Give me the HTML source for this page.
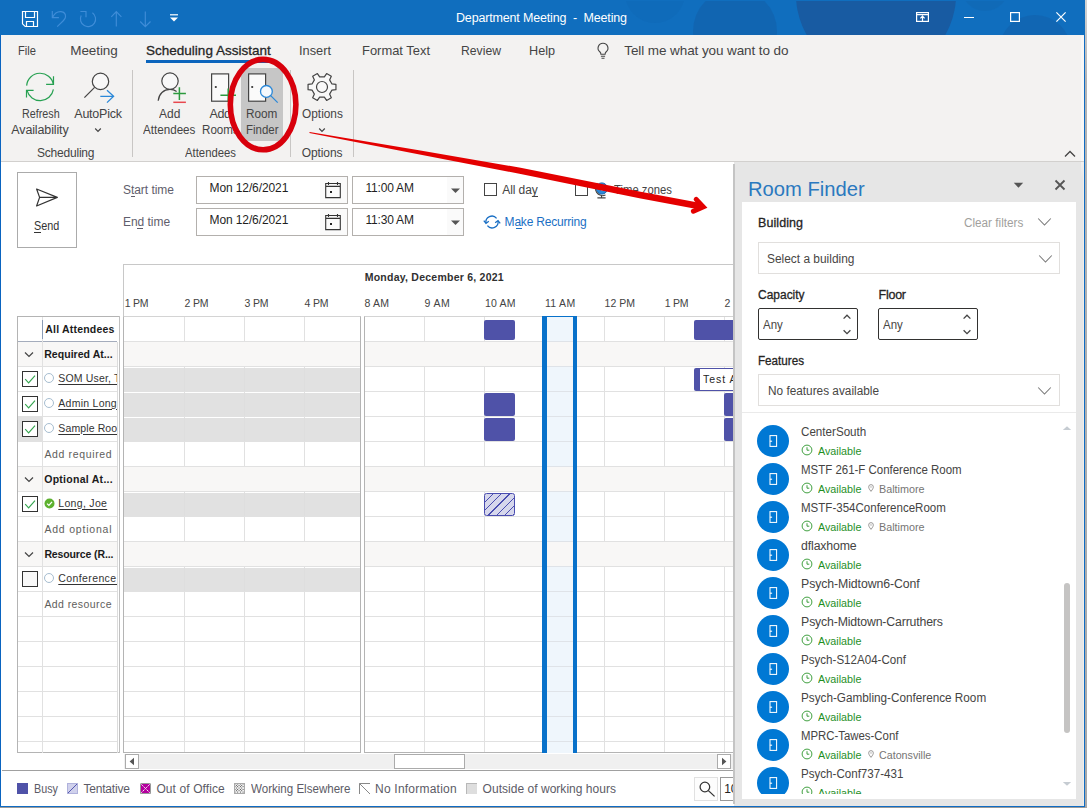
<!DOCTYPE html>
<html><head><meta charset="utf-8">
<title>Department Meeting - Meeting</title>
<style>
*{box-sizing:border-box;margin:0;padding:0}
html,body{width:1087px;height:808px;overflow:hidden;background:#fff}
body{font-family:"Liberation Sans",sans-serif;font-size:12px;color:#323130;position:relative}
.a{position:absolute}
.t{position:absolute;white-space:nowrap;line-height:16px}
svg{overflow:visible}
#titlebar{left:0;top:0;width:1085px;height:35px;background:#106ebe}
#ribbon{left:0;top:35px;width:1085px;height:127px;background:#f3f2f1;border-bottom:1px solid #d2d0ce}
#pane{left:734px;top:162px;width:352px;height:644px;background:#e6e6e6}
#panew{left:742px;top:202px;width:334px;height:597px;background:#fff}
</style></head><body>
<div class="a" id="titlebar"></div>
<div class="a" id="ribbon"></div>
<div class="a" id="pane"></div>
<div class="a" id="panew"></div>
<!-- title -->
<div class="a" style="left:0;top:1px;width:1085px;height:34px;overflow:hidden"><div class="a" style="left:796px;top:-86px;width:160px;height:160px;border-radius:50%;background:#185ba2;opacity:1"></div><div class="a" style="left:693px;top:-12px;width:84px;height:84px;border-radius:50%;background:#1261ab;opacity:0.65"></div><div class="a" style="left:625px;top:-38px;width:60px;height:60px;border-radius:50%;background:#0f66b4;opacity:0.4"></div><div class="a" style="left:999px;top:14px;width:72px;height:72px;border-radius:50%;background:#1261ab;opacity:0.6"></div><div class="a" style="left:961px;top:-38px;width:48px;height:48px;border-radius:50%;background:#1263ad;opacity:0.35"></div></div>
<div class="t" style="left:456.0px;top:9.5px;font-size:12.5px;color:#fff;letter-spacing:-0.165px;white-space:pre;">Department Meeting  -  Meeting</div>
<svg class="a" style="left:21px;top:10px;" width="18" height="18" viewBox="0 0 18 18" fill="none"><path d="M1.5 1.5H16.5V16.5H4.2L1.5 13.8z M4.5 1.5V7.5H13.5V1.5 M5.5 16.5V11.5H12.5V16.5" stroke="#fff" stroke-width="1.2" stroke-linejoin="miter"/></svg>
<svg class="a" style="left:0px;top:0px;" width="200" height="35" viewBox="0 0 200 35" fill="none"><path d="M52.3 11V17.6H58.9 M52.6 17.3C54.5 13.2 58 11.4 61 11.6C64 11.9 65.7 14.2 65.5 17C65.3 19 64 20.2 57.2 26.6" stroke="#3f8dd8" stroke-width="1.15"/><path d="M80.4 11.5H86V17.3 M81.2 15.6A7.6 7.6 0 1 0 92.4 12.8" stroke="#3f8dd8" stroke-width="1.15"/><path d="M116.3 26.6V11.5 M111.3 16.8L116.3 11.6L121.4 16.8" stroke="#3f8dd8" stroke-width="1.15"/><path d="M145.3 11.5V26.4 M140.2 21.5L145.3 26.6L150.5 21.5" stroke="#3f8dd8" stroke-width="1.15"/></svg>
<svg class="a" style="left:169px;top:13px;" width="10" height="10" viewBox="0 0 10 10" fill="none"><path d="M1 1.8h8" stroke="#fff" stroke-width="1.2"/><path d="M1 4.5h8L5 8.5z" fill="#fff"/></svg>
<svg class="a" style="left:916px;top:12px;" width="13" height="10" viewBox="0 0 13 10" fill="none"><rect x="0.6" y="0.6" width="11.8" height="8.8" stroke="#fff" stroke-width="1.2"/><path d="M0.6 2.6h11.8 M6.5 9.4V4.4 M4.4 6.3L6.5 4.2L8.6 6.3" stroke="#fff" stroke-width="1.2"/></svg>
<div class="a" style="left:964px;top:17px;width:10px;height:1px;background:#fff;"></div>
<svg class="a" style="left:1010px;top:12px;" width="10" height="10" viewBox="0 0 10 10" fill="none"><rect x="0.6" y="0.6" width="8.8" height="8.8" stroke="#fff" stroke-width="1.2"/></svg>
<svg class="a" style="left:1056px;top:12px;" width="10" height="10" viewBox="0 0 10 10" fill="none"><path d="M0.4 0.4l9.2 9.2 M9.6 0.4l-9.2 9.2" stroke="#fff" stroke-width="1.2"/></svg>
<!-- ribbon -->
<div class="t" style="left:18.4px;top:42.5px;font-size:13.5px;color:#444;transform:scaleX(0.8274);transform-origin:0 50%;">File</div>
<div class="t" style="left:70.3px;top:42.5px;font-size:13.5px;color:#444;letter-spacing:-0.088px;">Meeting</div>
<div class="t" style="left:298.8px;top:42.5px;font-size:13.5px;color:#444;transform:scaleX(0.9478);transform-origin:0 50%;">Insert</div>
<div class="t" style="left:362.0px;top:42.5px;font-size:13.5px;color:#444;transform:scaleX(0.9575);transform-origin:0 50%;">Format Text</div>
<div class="t" style="left:461.0px;top:42.5px;font-size:13.5px;color:#444;transform:scaleX(0.9036);transform-origin:0 50%;">Review</div>
<div class="t" style="left:529.0px;top:42.5px;font-size:13.5px;color:#444;transform:scaleX(0.9364);transform-origin:0 50%;">Help</div>
<div class="t" style="left:146.0px;top:42.5px;font-size:13.5px;color:#262626;letter-spacing:0.011px;-webkit-text-stroke:0.3px #262626;">Scheduling Assistant</div>
<div class="a" style="left:146px;top:60px;width:125px;height:3px;background:#0b65bd;"></div>
<div class="t" style="left:624.3px;top:42.5px;font-size:13.5px;color:#444;letter-spacing:-0.092px;">Tell me what you want to do</div>
<svg class="a" style="left:595.6px;top:42px;" width="14" height="18" viewBox="0 0 14 18" fill="none"><path d="M7 1.2a4.9 4.9 0 0 0-3 8.8c.6.6.9 1.2.9 2.2h4.2c0-1 .3-1.6.9-2.2A4.9 4.9 0 0 0 7 1.2z M4.9 14.2h4.2 M5.5 16.2h3" stroke="#444" stroke-width="1.1"/></svg>
<div class="a" style="left:1080.8px;top:36px;width:3.2px;height:125px;background:#f8f7f6;"></div>
<div class="a" style="left:132px;top:70px;width:1px;height:87px;background:#c8c6c4;"></div>
<div class="a" style="left:290px;top:70px;width:1px;height:87px;background:#c8c6c4;"></div>
<div class="a" style="left:353px;top:70px;width:1px;height:87px;background:#c8c6c4;"></div>
<div class="a" style="left:241px;top:68px;width:42px;height:73px;background:#c6c6c6;"></div>
<div class="t" style="left:21.6px;top:105.8px;font-size:12.5px;color:#444;transform:scaleX(0.8613);transform-origin:0 50%;">Refresh</div>
<div class="t" style="left:11.3px;top:121.6px;font-size:12.5px;color:#444;letter-spacing:-0.130px;">Availability</div>
<div class="t" style="left:74.3px;top:105.8px;font-size:12.5px;color:#444;letter-spacing:-0.233px;">AutoPick</div>
<div class="t" style="left:159.2px;top:105.8px;font-size:12.5px;color:#444;transform:scaleX(0.9576);transform-origin:0 50%;">Add</div>
<div class="t" style="left:143.2px;top:121.6px;font-size:12.5px;color:#444;transform:scaleX(0.9308);transform-origin:0 50%;">Attendees</div>
<div class="t" style="left:209.4px;top:105.8px;font-size:12.5px;color:#444;letter-spacing:-0.321px;">Add</div>
<div class="t" style="left:201.7px;top:121.6px;font-size:12.5px;color:#444;transform:scaleX(0.9294);transform-origin:0 50%;">Rooms</div>
<div class="t" style="left:246.3px;top:105.8px;font-size:12.5px;color:#444;transform:scaleX(0.9417);transform-origin:0 50%;">Room</div>
<div class="t" style="left:245.5px;top:121.6px;font-size:12.5px;color:#444;transform:scaleX(0.9172);transform-origin:0 50%;">Finder</div>
<div class="t" style="left:301.9px;top:105.8px;font-size:12.5px;color:#444;transform:scaleX(0.9494);transform-origin:0 50%;">Options</div>
<div class="t" style="left:37.0px;top:144.8px;font-size:12px;color:#444;letter-spacing:-0.209px;">Scheduling</div>
<div class="t" style="left:185.0px;top:144.8px;font-size:12px;color:#444;transform:scaleX(0.9437);transform-origin:0 50%;">Attendees</div>
<div class="t" style="left:301.8px;top:144.8px;font-size:12px;color:#444;letter-spacing:-0.109px;">Options</div>
<svg class="a" style="left:93.5px;top:126.5px;" width="8" height="6" viewBox="0 0 8 6" fill="none"><path d="M1.2 1.5L4 4.3L6.8 1.5" stroke="#444" stroke-width="1.2"/></svg>
<svg class="a" style="left:317.7px;top:126.5px;" width="8" height="6" viewBox="0 0 8 6" fill="none"><path d="M1.2 1.5L4 4.3L6.8 1.5" stroke="#444" stroke-width="1.2"/></svg>
<svg class="a" style="left:1064px;top:150px;" width="12" height="8" viewBox="0 0 12 8" fill="none"><path d="M1 6.5L6 1.5L11 6.5" stroke="#444" stroke-width="1.3"/></svg>
<svg class="a" style="left:24px;top:72px;" width="32" height="32" viewBox="0 0 32 32" fill="none"><path d="M2.65 13.6A13.5 13.5 0 0 1 29.4 12.4 M29.4 17.3A13.5 13.5 0 0 1 3 18.4" stroke="#27a152" stroke-width="1.2"/><path d="M29.5 4.3V12.4H22.1 M2.5 25.6V18.4H9.6" stroke="#27a152" stroke-width="1.2"/></svg>
<svg class="a" style="left:82px;top:71px;" width="34" height="34" viewBox="0 0 34 34" fill="none"><circle cx="18.5" cy="10.4" r="8.2" stroke="#444" stroke-width="1.2" fill="#f8f8f8"/><path d="M12.6 16.3L2.4 26.6" stroke="#444" stroke-width="1.2"/><path d="M18.3 25.3h13.2 M25 19.2l6.6 6.1L25 31.6" stroke="#2b88d8" stroke-width="1.3"/></svg>
<svg class="a" style="left:156px;top:71px;" width="32" height="34" viewBox="0 0 32 34" fill="none"><path d="M2.2 29.8c.6-7 5.5-11.4 11.8-11.4 2.6 0 4.8.7 6.6 2" stroke="#444" stroke-width="1.2"/><circle cx="14" cy="10.1" r="8.2" stroke="#444" stroke-width="1.2" fill="#f8f8f8"/><path d="M17.3 22.5h12.6 M23.4 16.2v12.7" stroke="#2c9a3e" stroke-width="1.5"/><path d="M17.3 31.3h12.6" stroke="#e8484f" stroke-width="1.5"/></svg>
<svg class="a" style="left:208px;top:71px;" width="32" height="34" viewBox="0 0 32 34" fill="none"><rect x="3.6" y="2.9" width="17" height="27.3" stroke="#444" stroke-width="1.2" fill="#fafafa"/><circle cx="7.8" cy="16" r="1.1" fill="#333"/><path d="M12.4 24.2h15.6 M20.2 17.5v13.4" stroke="#2c9a3e" stroke-width="1.5"/></svg>
<svg class="a" style="left:245px;top:71px;" width="36" height="34" viewBox="0 0 36 34" fill="none"><rect x="3.6" y="2.9" width="17" height="27.3" stroke="#444" stroke-width="1.2" fill="#fafafa"/><circle cx="7.2" cy="16" r="1.1" fill="#333"/><circle cx="21.4" cy="20.4" r="5.9" stroke="#2b88d8" stroke-width="1.3" fill="#f4f8fc"/><path d="M25.7 24.6l7 7" stroke="#2b88d8" stroke-width="1.3"/></svg>
<svg class="a" style="left:306px;top:71.2px;" width="32" height="32" viewBox="0 0 32 32" fill="none"><path d="M25.95 12.96 L29.94 13.29 L29.94 18.71 L25.95 19.04 L23.61 23.09 L25.32 26.72 L20.62 29.43 L18.34 26.13 L13.66 26.13 L11.38 29.43 L6.68 26.72 L8.39 23.09 L6.05 19.04 L2.06 18.71 L2.06 13.29 L6.05 12.96 L8.39 8.91 L6.68 5.28 L11.38 2.57 L13.66 5.87 L18.34 5.87 L20.62 2.57 L25.32 5.28 L23.61 8.91 z" stroke="#444" stroke-width="1.2" stroke-linejoin="round" fill="#f8f8f8"/><circle cx="16" cy="16" r="5.5" stroke="#444" stroke-width="1.2"/></svg>
<!-- form -->
<div class="a" style="left:17px;top:172px;width:60px;height:76px;background:#fff;border:1px solid #ababab;"></div>
<svg class="a" style="left:35px;top:187px;" width="24" height="21" viewBox="0 0 24 21" fill="none"><path d="M1.6 2L22.3 10.4L1.6 19L4.6 10.4z M4.6 10.4H22" stroke="#333" stroke-width="1.2" stroke-linejoin="round"/></svg>
<div class="t" style="left:34.0px;top:217.5px;font-size:12px;color:#333;transform:scaleX(0.9027);transform-origin:0 50%;text-decoration:none;">Send</div>
<div class="a" style="left:34px;top:232px;width:6.5px;height:1px;background:#333;"></div>
<div class="t" style="left:123.0px;top:181.6px;font-size:12px;color:#5f5e6c;letter-spacing:-0.050px;">Start time</div>
<div class="a" style="left:130.5px;top:196px;width:4px;height:1px;background:#5f5e6c;"></div>
<div class="t" style="left:123.0px;top:213.8px;font-size:12px;color:#5f5e6c;letter-spacing:-0.037px;">End time</div>
<div class="a" style="left:136.5px;top:228px;width:6.5px;height:1px;background:#5f5e6c;"></div>
<div class="a" style="left:196px;top:176px;width:152px;height:28px;background:#fff;border:1px solid #b3b0ad;"></div>
<div class="a" style="left:352px;top:176px;width:112px;height:28px;background:#fff;border:1px solid #b3b0ad;"></div>
<div class="t" style="left:209.5px;top:179.6px;font-size:12px;color:#1f1f1f;letter-spacing:-0.105px;">Mon 12/6/2021</div>
<div class="a" style="left:320px;top:177px;width:27px;height:26px;background:#fafafa;"></div>
<svg class="a" style="left:324px;top:182px;" width="18" height="17" viewBox="0 0 18 17" fill="none"><path d="M1.7 1.5h14.6v14.1H1.7z M1.7 4.4h14.6 M4.5 0v3 M13.5 0v3" stroke="#333" stroke-width="1.1"/><rect x="6" y="9" width="2" height="2" fill="#222"/></svg>
<div class="a" style="left:447px;top:177px;width:16px;height:26px;background:#fafafa;"></div>
<svg class="a" style="left:450px;top:188px;" width="11" height="6" viewBox="0 0 11 6" fill="none"><path d="M1 0.6h9L5.5 5z" fill="#555"/></svg>
<div class="a" style="left:196px;top:208px;width:152px;height:28px;background:#fff;border:1px solid #b3b0ad;"></div>
<div class="a" style="left:352px;top:208px;width:112px;height:28px;background:#fff;border:1px solid #b3b0ad;"></div>
<div class="t" style="left:209.5px;top:211.6px;font-size:12px;color:#1f1f1f;letter-spacing:-0.105px;">Mon 12/6/2021</div>
<div class="a" style="left:320px;top:209px;width:27px;height:26px;background:#fafafa;"></div>
<svg class="a" style="left:324px;top:214px;" width="18" height="17" viewBox="0 0 18 17" fill="none"><path d="M1.7 1.5h14.6v14.1H1.7z M1.7 4.4h14.6 M4.5 0v3 M13.5 0v3" stroke="#333" stroke-width="1.1"/><rect x="6" y="9" width="2" height="2" fill="#222"/></svg>
<div class="a" style="left:447px;top:209px;width:16px;height:26px;background:#fafafa;"></div>
<svg class="a" style="left:450px;top:220px;" width="11" height="6" viewBox="0 0 11 6" fill="none"><path d="M1 0.6h9L5.5 5z" fill="#555"/></svg>
<div class="t" style="left:365.5px;top:179.6px;font-size:12px;color:#1f1f1f;letter-spacing:-0.202px;">11:00 AM</div>
<div class="t" style="left:365.5px;top:212.2px;font-size:12px;color:#1f1f1f;letter-spacing:-0.202px;">11:30 AM</div>
<div class="a" style="left:484px;top:183px;width:13px;height:13px;background:#fff;border:1px solid #444;"></div>
<div class="t" style="left:502.3px;top:181.6px;font-size:12px;color:#444;letter-spacing:-0.103px;">All day</div>
<div class="a" style="left:531.5px;top:196px;width:6px;height:1px;background:#444;"></div>
<div class="a" style="left:575px;top:183px;width:13px;height:13px;background:#fff;border:1px solid #444;"></div>
<svg class="a" style="left:594px;top:181px;" width="15" height="18" viewBox="0 0 15 18" fill="none"><circle cx="7.8" cy="7.5" r="5.6" fill="#2b88d8" stroke="#1466b0" stroke-width="1"/><path d="M3.4 2.2A7.3 7.3 0 0 0 11.5 14" stroke="#444" stroke-width="1.1"/><path d="M7.5 14.5v2.2 M3.4 16.9h8.2" stroke="#444" stroke-width="1.1"/><path d="M5 5.5c1.5-1 3.5-.5 4.5 1s-.5 3-2 3" stroke="#bfe0ff" stroke-width="1"/></svg>
<div class="t" style="left:613.9px;top:181.6px;font-size:12px;color:#444;transform:scaleX(0.9403);transform-origin:0 50%;">Time zones</div>
<svg class="a" style="left:483px;top:214px;" width="18" height="16" viewBox="0 0 18 16" fill="none"><path d="M3 9.2A6 6 0 0 1 13.6 4.4 M15 6.8A6 6 0 0 1 4.4 11.6" stroke="#1a6fc4" stroke-width="1.3"/><path d="M0.8 6.6L3 9.4L5.8 7.2 M17.2 9.4L15 6.6L12.2 8.8" stroke="#1a6fc4" stroke-width="1.3"/></svg>
<div class="t" style="left:504.6px;top:213.8px;font-size:12px;color:#1a6fc4;letter-spacing:-0.200px;">Make Recurring</div>
<div class="a" style="left:516px;top:228px;width:6px;height:1px;background:#1a6fc4;"></div>
<!-- grid -->
<div class="a" style="left:123px;top:264px;width:611px;height:53px;background:#fff;border-top:1px solid #c8c8c8;border-left:1px solid #c8c8c8;"></div>
<div class="t" style="left:364.7px;top:269.3px;font-size:10.5px;color:#303030;font-weight:bold;letter-spacing:0.241px;">Monday, December 6, 2021</div>
<div class="t" style="left:124.7px;top:295.1px;font-size:10.5px;color:#444;letter-spacing:-0.236px;">1 PM</div>
<div class="t" style="left:184.6px;top:295.1px;font-size:10.5px;color:#444;letter-spacing:-0.169px;">2 PM</div>
<div class="t" style="left:244.6px;top:295.1px;font-size:10.5px;color:#444;letter-spacing:-0.169px;">3 PM</div>
<div class="t" style="left:304.6px;top:295.1px;font-size:10.5px;color:#444;letter-spacing:-0.169px;">4 PM</div>
<div class="t" style="left:364.4px;top:295.1px;font-size:10.5px;color:#444;letter-spacing:0.257px;">8 AM</div>
<div class="t" style="left:424.6px;top:295.1px;font-size:10.5px;color:#444;letter-spacing:0.390px;">9 AM</div>
<div class="t" style="left:484.9px;top:295.1px;font-size:10.5px;color:#444;letter-spacing:0.183px;">10 AM</div>
<div class="t" style="left:544.9px;top:295.1px;font-size:10.5px;color:#444;letter-spacing:0.328px;">11 AM</div>
<div class="t" style="left:604.6px;top:295.1px;font-size:10.5px;color:#444;letter-spacing:0.013px;">12 PM</div>
<div class="t" style="left:664.7px;top:295.1px;font-size:10.5px;color:#444;letter-spacing:-0.236px;">1 PM</div>
<div class="t" style="left:724.6px;top:295.1px;font-size:10.5px;color:#444;">2</div>
<div class="a" style="left:123px;top:316px;width:238px;height:437px;background:#fff;overflow:hidden;border:1px solid #b4b4b4;border-top-color:#d4d4d4;"><div class="a" style="left:0px;top:25px;width:238px;height:24px;background:#f8f7f6;"></div>
<div class="a" style="left:0px;top:150px;width:238px;height:24px;background:#f8f7f6;"></div>
<div class="a" style="left:0px;top:225px;width:238px;height:24px;background:#f8f7f6;"></div>
<div class="a" style="left:0px;top:51px;width:238px;height:22.5px;background:#e1e1e1;"></div>
<div class="a" style="left:0px;top:76px;width:238px;height:22.5px;background:#e1e1e1;"></div>
<div class="a" style="left:0px;top:101px;width:238px;height:22.5px;background:#e1e1e1;"></div>
<div class="a" style="left:0px;top:176px;width:238px;height:22.5px;background:#e1e1e1;"></div>
<div class="a" style="left:0px;top:251px;width:238px;height:22.5px;background:#e1e1e1;"></div>
<div class="a" style="left:0px;top:24px;width:238px;height:1px;background:#e1e1e1;"></div>
<div class="a" style="left:0px;top:49px;width:238px;height:1px;background:#e1e1e1;"></div>
<div class="a" style="left:0px;top:74px;width:238px;height:1px;background:#e1e1e1;"></div>
<div class="a" style="left:0px;top:99px;width:238px;height:1px;background:#e1e1e1;"></div>
<div class="a" style="left:0px;top:124px;width:238px;height:1px;background:#e1e1e1;"></div>
<div class="a" style="left:0px;top:149px;width:238px;height:1px;background:#e1e1e1;"></div>
<div class="a" style="left:0px;top:174px;width:238px;height:1px;background:#e1e1e1;"></div>
<div class="a" style="left:0px;top:199px;width:238px;height:1px;background:#e1e1e1;"></div>
<div class="a" style="left:0px;top:224px;width:238px;height:1px;background:#e1e1e1;"></div>
<div class="a" style="left:0px;top:249px;width:238px;height:1px;background:#e1e1e1;"></div>
<div class="a" style="left:0px;top:274px;width:238px;height:1px;background:#e1e1e1;"></div>
<div class="a" style="left:0px;top:299px;width:238px;height:1px;background:#e1e1e1;"></div>
<div class="a" style="left:0px;top:324px;width:238px;height:1px;background:#e1e1e1;"></div>
<div class="a" style="left:0px;top:349px;width:238px;height:1px;background:#e1e1e1;"></div>
<div class="a" style="left:0px;top:374px;width:238px;height:1px;background:#e1e1e1;"></div>
<div class="a" style="left:0px;top:399px;width:238px;height:1px;background:#e1e1e1;"></div>
<div class="a" style="left:0px;top:424px;width:238px;height:1px;background:#e1e1e1;"></div>
<div class="a" style="left:0px;top:449px;width:238px;height:1px;background:#e1e1e1;"></div>
<div class="a" style="left:60px;top:0px;width:1px;height:437px;background:#e1e1e1;"></div>
<div class="a" style="left:120px;top:0px;width:1px;height:437px;background:#e1e1e1;"></div>
<div class="a" style="left:180px;top:0px;width:1px;height:437px;background:#e1e1e1;"></div>
<div class="a" style="left:0px;top:25px;width:238px;height:24px;background:#f8f7f6;"></div>
<div class="a" style="left:0px;top:150px;width:238px;height:24px;background:#f8f7f6;"></div>
<div class="a" style="left:0px;top:225px;width:238px;height:24px;background:#f8f7f6;"></div>
<div class="a" style="left:60px;top:51px;width:1px;height:22.5px;background:#dedede;"></div>
<div class="a" style="left:120px;top:51px;width:1px;height:22.5px;background:#dedede;"></div>
<div class="a" style="left:180px;top:51px;width:1px;height:22.5px;background:#dedede;"></div>
<div class="a" style="left:60px;top:76px;width:1px;height:22.5px;background:#dedede;"></div>
<div class="a" style="left:120px;top:76px;width:1px;height:22.5px;background:#dedede;"></div>
<div class="a" style="left:180px;top:76px;width:1px;height:22.5px;background:#dedede;"></div>
<div class="a" style="left:60px;top:101px;width:1px;height:22.5px;background:#dedede;"></div>
<div class="a" style="left:120px;top:101px;width:1px;height:22.5px;background:#dedede;"></div>
<div class="a" style="left:180px;top:101px;width:1px;height:22.5px;background:#dedede;"></div>
<div class="a" style="left:60px;top:176px;width:1px;height:22.5px;background:#dedede;"></div>
<div class="a" style="left:120px;top:176px;width:1px;height:22.5px;background:#dedede;"></div>
<div class="a" style="left:180px;top:176px;width:1px;height:22.5px;background:#dedede;"></div>
<div class="a" style="left:60px;top:251px;width:1px;height:22.5px;background:#dedede;"></div>
<div class="a" style="left:120px;top:251px;width:1px;height:22.5px;background:#dedede;"></div>
<div class="a" style="left:180px;top:251px;width:1px;height:22.5px;background:#dedede;"></div>
</div>
<div class="a" style="left:364px;top:316px;width:370px;height:437px;background:#fff;overflow:hidden;border:1px solid #b4b4b4;border-top-color:#d4d4d4;border-right:none;"><div class="a" style="left:0px;top:25px;width:370px;height:24px;background:#f8f7f6;"></div>
<div class="a" style="left:0px;top:150px;width:370px;height:24px;background:#f8f7f6;"></div>
<div class="a" style="left:0px;top:225px;width:370px;height:24px;background:#f8f7f6;"></div>
<div class="a" style="left:0px;top:24px;width:370px;height:1px;background:#e1e1e1;"></div>
<div class="a" style="left:0px;top:49px;width:370px;height:1px;background:#e1e1e1;"></div>
<div class="a" style="left:0px;top:74px;width:370px;height:1px;background:#e1e1e1;"></div>
<div class="a" style="left:0px;top:99px;width:370px;height:1px;background:#e1e1e1;"></div>
<div class="a" style="left:0px;top:124px;width:370px;height:1px;background:#e1e1e1;"></div>
<div class="a" style="left:0px;top:149px;width:370px;height:1px;background:#e1e1e1;"></div>
<div class="a" style="left:0px;top:174px;width:370px;height:1px;background:#e1e1e1;"></div>
<div class="a" style="left:0px;top:199px;width:370px;height:1px;background:#e1e1e1;"></div>
<div class="a" style="left:0px;top:224px;width:370px;height:1px;background:#e1e1e1;"></div>
<div class="a" style="left:0px;top:249px;width:370px;height:1px;background:#e1e1e1;"></div>
<div class="a" style="left:0px;top:274px;width:370px;height:1px;background:#e1e1e1;"></div>
<div class="a" style="left:0px;top:299px;width:370px;height:1px;background:#e1e1e1;"></div>
<div class="a" style="left:0px;top:324px;width:370px;height:1px;background:#e1e1e1;"></div>
<div class="a" style="left:0px;top:349px;width:370px;height:1px;background:#e1e1e1;"></div>
<div class="a" style="left:0px;top:374px;width:370px;height:1px;background:#e1e1e1;"></div>
<div class="a" style="left:0px;top:399px;width:370px;height:1px;background:#e1e1e1;"></div>
<div class="a" style="left:0px;top:424px;width:370px;height:1px;background:#e1e1e1;"></div>
<div class="a" style="left:0px;top:449px;width:370px;height:1px;background:#e1e1e1;"></div>
<div class="a" style="left:59px;top:0px;width:1px;height:437px;background:#e1e1e1;"></div>
<div class="a" style="left:119px;top:0px;width:1px;height:437px;background:#e1e1e1;"></div>
<div class="a" style="left:179px;top:0px;width:1px;height:437px;background:#e1e1e1;"></div>
<div class="a" style="left:239px;top:0px;width:1px;height:437px;background:#e1e1e1;"></div>
<div class="a" style="left:299px;top:0px;width:1px;height:437px;background:#e1e1e1;"></div>
<div class="a" style="left:359px;top:0px;width:1px;height:437px;background:#e1e1e1;"></div>
<div class="a" style="left:0px;top:25px;width:370px;height:24px;background:#f8f7f6;"></div>
<div class="a" style="left:0px;top:150px;width:370px;height:24px;background:#f8f7f6;"></div>
<div class="a" style="left:0px;top:225px;width:370px;height:24px;background:#f8f7f6;"></div>
</div>
<div class="a" style="left:484px;top:320px;width:31px;height:20px;background:#4f52a8;border-radius:2px;"></div>
<div class="a" style="left:484px;top:393px;width:31px;height:22.5px;background:#4f52a8;border-radius:2px;"></div>
<div class="a" style="left:484px;top:418px;width:31px;height:22.5px;background:#4f52a8;border-radius:2px;"></div>
<div class="a" style="left:694px;top:320px;width:40px;height:20px;background:#4f52a8;border-radius:2px;"></div>
<div class="a" style="left:730px;top:320px;width:4px;height:20px;background:#4f52a8;"></div>
<div class="a" style="left:724px;top:393px;width:10px;height:22.5px;background:#4f52a8;border-radius:2px;"></div>
<div class="a" style="left:730px;top:393px;width:4px;height:22.5px;background:#4f52a8;"></div>
<div class="a" style="left:724px;top:418px;width:10px;height:22.5px;background:#4f52a8;border-radius:2px;"></div>
<div class="a" style="left:730px;top:418px;width:4px;height:22.5px;background:#4f52a8;"></div>
<div class="a" style="left:694px;top:368px;width:40px;height:23px;background:#fff;border:1px solid #4f52a8;border-left:6px solid #4f52a8;border-right:none;border-radius:2px 0 0 2px;"></div>
<div class="t" style="left:703.0px;top:371.0px;font-size:10.5px;color:#262626;letter-spacing:0.980px;overflow:hidden;width:31px;">Test A</div>
<div class="a" style="left:484px;top:493px;width:31px;height:23px;border:1px solid #4a4db0;border-radius:2.5px;background:repeating-linear-gradient(135deg,#d6d7ec 0 5px,#4a4db0 5px 5.9px)"></div>
<div class="a" style="left:542px;top:316px;width:35px;height:437px;background:#eff6fc;border-left:5px solid #0871ca;border-right:4px solid #0871ca;border-top:1px solid #0871ca;"></div>
<div class="a" style="left:547px;top:341px;width:26px;height:1px;background:#dfe3e8;"></div>
<div class="a" style="left:547px;top:366px;width:26px;height:1px;background:#dfe3e8;"></div>
<div class="a" style="left:547px;top:391px;width:26px;height:1px;background:#dfe3e8;"></div>
<div class="a" style="left:547px;top:416px;width:26px;height:1px;background:#dfe3e8;"></div>
<div class="a" style="left:547px;top:441px;width:26px;height:1px;background:#dfe3e8;"></div>
<div class="a" style="left:547px;top:466px;width:26px;height:1px;background:#dfe3e8;"></div>
<div class="a" style="left:547px;top:491px;width:26px;height:1px;background:#dfe3e8;"></div>
<div class="a" style="left:547px;top:516px;width:26px;height:1px;background:#dfe3e8;"></div>
<div class="a" style="left:547px;top:541px;width:26px;height:1px;background:#dfe3e8;"></div>
<div class="a" style="left:547px;top:566px;width:26px;height:1px;background:#dfe3e8;"></div>
<div class="a" style="left:547px;top:591px;width:26px;height:1px;background:#dfe3e8;"></div>
<div class="a" style="left:547px;top:616px;width:26px;height:1px;background:#dfe3e8;"></div>
<div class="a" style="left:547px;top:641px;width:26px;height:1px;background:#dfe3e8;"></div>
<div class="a" style="left:547px;top:666px;width:26px;height:1px;background:#dfe3e8;"></div>
<div class="a" style="left:547px;top:691px;width:26px;height:1px;background:#dfe3e8;"></div>
<div class="a" style="left:547px;top:716px;width:26px;height:1px;background:#dfe3e8;"></div>
<div class="a" style="left:547px;top:741px;width:26px;height:1px;background:#dfe3e8;"></div>
<div class="a" style="left:547px;top:766px;width:26px;height:1px;background:#dfe3e8;"></div>
<div class="a" style="left:547px;top:342px;width:26px;height:24px;background:#f8f7f6;"></div>
<div class="a" style="left:547px;top:467px;width:26px;height:24px;background:#f8f7f6;"></div>
<div class="a" style="left:547px;top:542px;width:26px;height:24px;background:#f8f7f6;"></div>
<div class="a" style="left:124px;top:754px;width:609px;height:15px;background:#f0f0f0;"></div>
<div class="a" style="left:125px;top:754px;width:14px;height:15px;background:#fff;border:1px solid #ababab;"></div>
<svg class="a" style="left:128px;top:757px;" width="8" height="9" viewBox="0 0 8 9" fill="none"><path d="M6 0.8v7.4L1.6 4.5z" fill="#555"/></svg>
<div class="a" style="left:717px;top:754px;width:14px;height:15px;background:#fff;border:1px solid #ababab;"></div>
<svg class="a" style="left:720px;top:757px;" width="8" height="9" viewBox="0 0 8 9" fill="none"><path d="M2 0.8v7.4l4.4-3.7z" fill="#555"/></svg>
<div class="a" style="left:394px;top:754px;width:71px;height:15px;background:#fff;border:1px solid #ababab;"></div>
<!-- attendees -->
<div class="a" style="left:17px;top:316px;width:103px;height:437px;background:#fff;border-left:1px solid #b4b4b4;border-top:1px solid #b4b4b4;"></div>
<div class="a" style="left:17px;top:752px;width:103px;height:1px;background:#b4b4b4;"></div>
<div class="a" style="left:119px;top:316px;width:1px;height:437px;background:#c0c0c0;"></div>
<div class="a" style="left:116.5px;top:342px;width:1px;height:411px;background:#dcdcdc;"></div>
<div class="a" style="left:18px;top:342px;width:99px;height:24px;background:#f8f7f6;"></div>
<div class="a" style="left:18px;top:467px;width:99px;height:24px;background:#f8f7f6;"></div>
<div class="a" style="left:18px;top:542px;width:99px;height:24px;background:#f8f7f6;"></div>
<div class="a" style="left:18px;top:417px;width:24px;height:24px;background:#e1e1e1;"></div>
<div class="a" style="left:18px;top:341px;width:99px;height:1px;background:#a4acbc;"></div>
<div class="a" style="left:18px;top:366px;width:99px;height:1px;background:#e1e1e1;"></div>
<div class="a" style="left:18px;top:391px;width:99px;height:1px;background:#e1e1e1;"></div>
<div class="a" style="left:18px;top:416px;width:99px;height:1px;background:#e1e1e1;"></div>
<div class="a" style="left:18px;top:441px;width:99px;height:1px;background:#e1e1e1;"></div>
<div class="a" style="left:18px;top:466px;width:99px;height:1px;background:#e1e1e1;"></div>
<div class="a" style="left:18px;top:491px;width:99px;height:1px;background:#e1e1e1;"></div>
<div class="a" style="left:18px;top:516px;width:99px;height:1px;background:#e1e1e1;"></div>
<div class="a" style="left:18px;top:541px;width:99px;height:1px;background:#e1e1e1;"></div>
<div class="a" style="left:18px;top:566px;width:99px;height:1px;background:#e1e1e1;"></div>
<div class="a" style="left:18px;top:591px;width:99px;height:1px;background:#e1e1e1;"></div>
<div class="a" style="left:18px;top:616px;width:99px;height:1px;background:#e1e1e1;"></div>
<div class="a" style="left:18px;top:641px;width:99px;height:1px;background:#e1e1e1;"></div>
<div class="a" style="left:18px;top:666px;width:99px;height:1px;background:#e1e1e1;"></div>
<div class="a" style="left:18px;top:691px;width:99px;height:1px;background:#e1e1e1;"></div>
<div class="a" style="left:18px;top:716px;width:99px;height:1px;background:#e1e1e1;"></div>
<div class="a" style="left:18px;top:741px;width:99px;height:1px;background:#e1e1e1;"></div>
<div class="a" style="left:42px;top:317px;width:1px;height:436px;background:#e1e1e1;"></div>
<div class="a" style="left:42px;top:320px;width:1px;height:19px;background:#8a9bb5;"></div>
<div class="t" style="left:45.3px;top:321.0px;font-size:10.5px;color:#1b1b1b;font-weight:bold;letter-spacing:0.199px;">All Attendees</div>
<svg class="a" style="left:24px;top:351px;" width="10" height="8" viewBox="0 0 10 8" fill="none"><path d="M1 1.5L5 5.5L9 1.5" stroke="#444" stroke-width="1.2"/></svg>
<div class="t" style="left:44.2px;top:346.0px;font-size:10.5px;color:#1b1b1b;font-weight:bold;letter-spacing:0.049px;">Required At...</div>
<div class="a" style="left:22px;top:371px;width:16px;height:16px;background:#fff;border:1px solid #333;"></div>
<svg class="a" style="left:22px;top:371px;" width="16" height="16" viewBox="0 0 16 16" fill="none"><path d="M3.2 8.2L6.6 11.8L13 4.6" stroke="#35a550" stroke-width="1.15"/></svg>
<div class="a" style="left:44px;top:373px;width:10px;height:10px;background:#fff;border:1px solid #a6bdd0;border-radius:50%;"></div>
<div class="a" style="left:58px;top:367px;width:58.5px;height:24px;overflow:hidden"><div class="t" style="left:0.3px;top:2.5px;font-size:10.5px;color:#333;letter-spacing:0.170px;text-decoration:underline;text-underline-offset:1.6px;text-decoration-thickness:1px">SOM User, T</div></div>
<div class="a" style="left:22px;top:396px;width:16px;height:16px;background:#fff;border:1px solid #333;"></div>
<svg class="a" style="left:22px;top:396px;" width="16" height="16" viewBox="0 0 16 16" fill="none"><path d="M3.2 8.2L6.6 11.8L13 4.6" stroke="#35a550" stroke-width="1.15"/></svg>
<div class="a" style="left:44px;top:398px;width:10px;height:10px;background:#fff;border:1px solid #a6bdd0;border-radius:50%;"></div>
<div class="a" style="left:58px;top:392px;width:58.5px;height:24px;overflow:hidden"><div class="t" style="left:0.3px;top:2.5px;font-size:10.5px;color:#333;letter-spacing:0.263px;text-decoration:underline;text-underline-offset:1.6px;text-decoration-thickness:1px">Admin Long</div></div>
<div class="a" style="left:22px;top:421px;width:16px;height:16px;background:#fff;border:1px solid #333;"></div>
<svg class="a" style="left:22px;top:421px;" width="16" height="16" viewBox="0 0 16 16" fill="none"><path d="M3.2 8.2L6.6 11.8L13 4.6" stroke="#35a550" stroke-width="1.15"/></svg>
<div class="a" style="left:44px;top:423px;width:10px;height:10px;background:#fff;border:1px solid #a6bdd0;border-radius:50%;"></div>
<div class="a" style="left:58px;top:417px;width:58.5px;height:24px;overflow:hidden"><div class="t" style="left:0.3px;top:2.5px;font-size:10.5px;color:#333;letter-spacing:0.120px;text-decoration:underline;text-underline-offset:1.6px;text-decoration-thickness:1px">Sample Room</div></div>
<div class="t" style="left:44.4px;top:446.0px;font-size:10.5px;color:#605e5c;letter-spacing:0.652px;">Add required</div>
<svg class="a" style="left:24px;top:476px;" width="10" height="8" viewBox="0 0 10 8" fill="none"><path d="M1 1.5L5 5.5L9 1.5" stroke="#444" stroke-width="1.2"/></svg>
<div class="t" style="left:44.2px;top:471.0px;font-size:10.5px;color:#1b1b1b;font-weight:bold;letter-spacing:0.274px;">Optional At...</div>
<div class="a" style="left:22px;top:496px;width:16px;height:16px;background:#fff;border:1px solid #333;"></div>
<svg class="a" style="left:22px;top:496px;" width="16" height="16" viewBox="0 0 16 16" fill="none"><path d="M3.2 8.2L6.6 11.8L13 4.6" stroke="#35a550" stroke-width="1.15"/></svg>
<svg class="a" style="left:43.5px;top:497.7px;" width="11" height="11" viewBox="0 0 11 11" fill="none"><circle cx="5.5" cy="5.5" r="5" fill="#5db12f"/><path d="M3 5.6L4.9 7.4L8 3.9" stroke="#fff" stroke-width="1.3"/></svg>
<div class="a" style="left:58px;top:492px;width:58.5px;height:24px;overflow:hidden"><div class="t" style="left:0.3px;top:2.5px;font-size:10.5px;color:#333;letter-spacing:0.310px;text-decoration:underline;text-underline-offset:1.6px;text-decoration-thickness:1px">Long, Joe</div></div>
<div class="t" style="left:44.4px;top:521.0px;font-size:10.5px;color:#605e5c;letter-spacing:0.793px;">Add optional</div>
<svg class="a" style="left:24px;top:551px;" width="10" height="8" viewBox="0 0 10 8" fill="none"><path d="M1 1.5L5 5.5L9 1.5" stroke="#444" stroke-width="1.2"/></svg>
<div class="t" style="left:44.4px;top:546.0px;font-size:10.5px;color:#1b1b1b;font-weight:bold;letter-spacing:-0.123px;">Resource (R...</div>
<div class="a" style="left:22px;top:571px;width:16px;height:16px;background:#f8f8f8;border:1px solid #333;"></div>
<div class="a" style="left:44px;top:573px;width:10px;height:10px;background:#fff;border:1px solid #a6bdd0;border-radius:50%;"></div>
<div class="a" style="left:58px;top:567px;width:58.5px;height:24px;overflow:hidden"><div class="t" style="left:0.3px;top:2.5px;font-size:10.5px;color:#333;letter-spacing:0.390px;text-decoration:underline;text-underline-offset:1.6px;text-decoration-thickness:1px">Conference Room</div></div>
<div class="t" style="left:44.4px;top:596.0px;font-size:10.5px;color:#605e5c;letter-spacing:0.422px;">Add resource</div>
<!-- legend -->
<div class="a" style="left:2px;top:770px;width:732px;height:1px;background:#a0a0a0;"></div>
<div class="a" style="left:17px;top:783px;width:11px;height:11px;background:#4f52a8;"></div>
<div class="t" style="left:33.7px;top:781.2px;font-size:12px;color:#5c5b66;transform:scaleX(0.8959);transform-origin:0 50%;">Busy</div>
<div class="a" style="left:67px;top:783px;width:11px;height:11px;background:linear-gradient(135deg,#d0d1ec 0 46%,#5558af 46% 54%,#d0d1ec 54%);border:0.5px solid #b0b2dc"></div><div class="t" style="left:83.4px;top:781.2px;font-size:12px;color:#5c5b66;letter-spacing:-0.179px;">Tentative</div>
<div class="a" style="left:140px;top:783px;width:11px;height:11px;background:#b4009e;border:0.5px solid #999;"></div>
<svg class="a" style="left:140px;top:783px;" width="11" height="11" viewBox="0 0 11 11" fill="none"><path d="M0.5 0.5L10.5 10.5 M10.5 0.5L0.5 10.5" stroke="#fff" stroke-width="0.9" stroke-dasharray="1.6 0.7"/></svg>
<div class="t" style="left:156.4px;top:781.2px;font-size:12px;color:#5c5b66;letter-spacing:0.105px;">Out of Office</div>
<div class="a" style="left:234px;top:783px;width:11px;height:11px;border:0.5px solid #aaa;background-color:#f0f0f0;background-image:radial-gradient(#333 0.62px,transparent 0.8px),radial-gradient(#333 0.62px,transparent 0.8px);background-size:2.7px 2.7px;background-position:0 0,1.35px 1.35px"></div><div class="t" style="left:250.6px;top:781.2px;font-size:12px;color:#5c5b66;transform:scaleX(0.9636);transform-origin:0 50%;">Working Elsewhere</div>
<svg class="a" style="left:359px;top:783px;" width="12" height="12" viewBox="0 0 12 12" fill="none"><path d="M0.5 11V0.5H11 M0.5 0.5L11 11" stroke="#888" stroke-width="1"/></svg>
<div class="t" style="left:375.0px;top:781.2px;font-size:12px;color:#5c5b66;letter-spacing:0.223px;">No Information</div>
<div class="a" style="left:466px;top:783px;width:11px;height:11px;background:#dedede;border-top:1px solid #b8b8b8;border-left:1px solid #b8b8b8;"></div>
<div class="t" style="left:482.6px;top:781.2px;font-size:12px;color:#5c5b66;letter-spacing:0.029px;">Outside of working hours</div>
<div class="a" style="left:694px;top:777px;width:24px;height:24px;background:#fdfdfd;border:1px solid #e1e1e1;"></div>
<svg class="a" style="left:697px;top:780px;" width="18" height="18" viewBox="0 0 18 18" fill="none"><circle cx="7.9" cy="7" r="4.8" stroke="#333" stroke-width="1.25"/><path d="M11.4 10.6L17.6 16.4" stroke="#333" stroke-width="1.3"/></svg>
<div class="a" style="left:720px;top:777px;width:13.4px;height:24px;overflow:hidden"><div class="a" style="left:0px;top:0px;width:20px;height:23.5px;background:#fff;border:1px solid #999;"></div>
<div class="t" style="left:4.2px;top:3.8px;font-size:12px;color:#222;">10</div>
</div>
<!-- pane -->
<div class="a" style="left:733.4px;top:164px;width:1.6px;height:640px;background:#c4c4c4;"></div>
<div class="a" style="left:1080.8px;top:162px;width:3.2px;height:16px;background:linear-gradient(#f2f1f0,#e6e6e6);"></div>
<div class="a" style="left:1083px;top:162px;width:1px;height:644px;background:#f1eeea;"></div>
<div class="t" style="left:748.0px;top:180.6px;font-size:21px;color:#2b79bf;transform:scaleX(0.9614);transform-origin:0 50%;line-height:28px;margin-top:-6px;">Room Finder</div>
<svg class="a" style="left:1013px;top:182px;" width="11" height="7" viewBox="0 0 11 7" fill="none"><path d="M0.8 0.8h9.4L5.5 5.8z" fill="#555"/></svg>
<svg class="a" style="left:1054px;top:179px;" width="12" height="12" viewBox="0 0 12 12" fill="none"><path d="M1.5 1.5l9 9 M10.5 1.5l-9 9" stroke="#555" stroke-width="1.8"/></svg>
<div class="t" style="left:758.0px;top:215.0px;font-size:12.5px;color:#252423;letter-spacing:0.074px;-webkit-text-stroke:0.3px #252423;">Building</div>
<div class="t" style="left:963.7px;top:215.0px;font-size:12.5px;color:#a19f9d;transform:scaleX(0.9381);transform-origin:0 50%;">Clear filters</div>
<svg class="a" style="left:1037px;top:217px;" width="15" height="10" viewBox="0 0 15 10" fill="none"><path d="M1.2 1.5L7.5 8L13.8 1.5" stroke="#777" stroke-width="1.05"/></svg>
<div class="a" style="left:758px;top:242px;width:302px;height:32px;background:#fff;border:1px solid #e1dfdd;"></div>
<div class="t" style="left:767.0px;top:251.3px;font-size:12.5px;color:#484644;transform:scaleX(0.9528);transform-origin:0 50%;">Select a building</div>
<svg class="a" style="left:1038px;top:254px;" width="15" height="10" viewBox="0 0 15 10" fill="none"><path d="M1.2 1.5L7.5 8L13.8 1.5" stroke="#777" stroke-width="1.05"/></svg>
<div class="t" style="left:758.0px;top:286.8px;font-size:12.5px;color:#252423;transform:scaleX(0.9582);transform-origin:0 50%;-webkit-text-stroke:0.3px #252423;">Capacity</div>
<div class="t" style="left:878.5px;top:286.8px;font-size:12.5px;color:#252423;letter-spacing:-0.245px;-webkit-text-stroke:0.3px #252423;">Floor</div>
<div class="a" style="left:758px;top:308px;width:100px;height:32px;background:#fff;border:1px solid #323130;border-radius:2px;"></div>
<div class="t" style="left:763.2px;top:317.0px;font-size:12.5px;color:#484644;transform:scaleX(0.9192);transform-origin:0 50%;">Any</div>
<svg class="a" style="left:842.5px;top:314px;" width="8" height="6" viewBox="0 0 8 6" fill="none"><path d="M0.6 4.6L4 1.2L7.4 4.6" stroke="#444" stroke-width="1.3"/></svg>
<svg class="a" style="left:842.5px;top:328.5px;" width="8" height="6" viewBox="0 0 8 6" fill="none"><path d="M0.6 1.2L4 4.6L7.4 1.2" stroke="#444" stroke-width="1.3"/></svg>
<div class="a" style="left:878px;top:308px;width:100px;height:32px;background:#fff;border:1px solid #323130;border-radius:2px;"></div>
<div class="t" style="left:883.2px;top:317.0px;font-size:12.5px;color:#484644;transform:scaleX(0.9192);transform-origin:0 50%;">Any</div>
<svg class="a" style="left:962.5px;top:314px;" width="8" height="6" viewBox="0 0 8 6" fill="none"><path d="M0.6 4.6L4 1.2L7.4 4.6" stroke="#444" stroke-width="1.3"/></svg>
<svg class="a" style="left:962.5px;top:328.5px;" width="8" height="6" viewBox="0 0 8 6" fill="none"><path d="M0.6 1.2L4 4.6L7.4 1.2" stroke="#444" stroke-width="1.3"/></svg>
<div class="t" style="left:758.0px;top:352.6px;font-size:12.5px;color:#252423;transform:scaleX(0.9325);transform-origin:0 50%;-webkit-text-stroke:0.3px #252423;">Features</div>
<div class="a" style="left:758px;top:374px;width:302px;height:32px;background:#fff;border:1px solid #e1dfdd;"></div>
<div class="t" style="left:768.0px;top:382.7px;font-size:12.5px;color:#484644;transform:scaleX(0.9452);transform-origin:0 50%;">No features available</div>
<svg class="a" style="left:1037px;top:386px;" width="15" height="10" viewBox="0 0 15 10" fill="none"><path d="M1.2 1.5L7.5 8L13.8 1.5" stroke="#777" stroke-width="1.05"/></svg>
<div class="a" style="left:742px;top:412px;width:334px;height:1px;background:#eaeaea;"></div>
<div class="a" style="left:742px;top:413px;width:334px;height:381px;overflow:hidden"><div class="a" style="left:15px;top:12px;width:32px;height:32px;background:#0078d4;border-radius:50%;"></div>
<svg class="a" style="left:27px;top:22px;" width="9" height="12" viewBox="0 0 9 12" fill="none"><rect x="1" y="0.6" width="6.6" height="10.8" stroke="#fff" stroke-width="1.05"/><path d="M0.9 6.2h2.2" stroke="#fff" stroke-width="1.1"/></svg>
<div class="t" style="left:59.1px;top:10.7px;font-size:12.3px;color:#454443;transform:scaleX(0.9455);transform-origin:0 50%;">CenterSouth</div>
<svg class="a" style="left:59px;top:30.8px;" width="12" height="12" viewBox="0 0 12 12" fill="none"><circle cx="6" cy="6" r="4.9" stroke="#1f8f1f" stroke-width="0.85"/><path d="M6 3.2V6.2H8.3" stroke="#1f8f1f" stroke-width="0.85"/></svg>
<div class="t" style="left:76.0px;top:29.7px;font-size:11.5px;color:#1f8f1f;transform:scaleX(0.9341);transform-origin:0 50%;">Available</div>
<div class="a" style="left:15px;top:50px;width:32px;height:32px;background:#0078d4;border-radius:50%;"></div>
<svg class="a" style="left:27px;top:60px;" width="9" height="12" viewBox="0 0 9 12" fill="none"><rect x="1" y="0.6" width="6.6" height="10.8" stroke="#fff" stroke-width="1.05"/><path d="M0.9 6.2h2.2" stroke="#fff" stroke-width="1.1"/></svg>
<div class="t" style="left:59.1px;top:48.7px;font-size:12.3px;color:#454443;transform:scaleX(0.9323);transform-origin:0 50%;">MSTF 261-F Conference Room</div>
<svg class="a" style="left:59px;top:68.8px;" width="12" height="12" viewBox="0 0 12 12" fill="none"><circle cx="6" cy="6" r="4.9" stroke="#1f8f1f" stroke-width="0.85"/><path d="M6 3.2V6.2H8.3" stroke="#1f8f1f" stroke-width="0.85"/></svg>
<div class="t" style="left:76.0px;top:67.7px;font-size:11.5px;color:#1f8f1f;transform:scaleX(0.9341);transform-origin:0 50%;">Available</div>
<svg class="a" style="left:126.2px;top:71.2px;" width="6" height="8.6" viewBox="0 0 7 10" fill="none"><path d="M3.5 8.6C1.5 6 0.8 4.8 0.8 3.4a2.7 2.7 0 0 1 5.4 0c0 1.4-.7 2.6-2.7 5.2z" stroke="#8a8886" stroke-width="1"/><circle cx="3.5" cy="3.4" r="0.7" fill="#8a8886"/></svg>
<div class="t" style="left:136.8px;top:67.7px;font-size:11.5px;color:#767574;transform:scaleX(0.9388);transform-origin:0 50%;">Baltimore</div>
<div class="a" style="left:15px;top:88px;width:32px;height:32px;background:#0078d4;border-radius:50%;"></div>
<svg class="a" style="left:27px;top:98px;" width="9" height="12" viewBox="0 0 9 12" fill="none"><rect x="1" y="0.6" width="6.6" height="10.8" stroke="#fff" stroke-width="1.05"/><path d="M0.9 6.2h2.2" stroke="#fff" stroke-width="1.1"/></svg>
<div class="t" style="left:59.1px;top:86.7px;font-size:12.3px;color:#454443;transform:scaleX(0.9379);transform-origin:0 50%;">MSTF-354ConferenceRoom</div>
<svg class="a" style="left:59px;top:106.8px;" width="12" height="12" viewBox="0 0 12 12" fill="none"><circle cx="6" cy="6" r="4.9" stroke="#1f8f1f" stroke-width="0.85"/><path d="M6 3.2V6.2H8.3" stroke="#1f8f1f" stroke-width="0.85"/></svg>
<div class="t" style="left:76.0px;top:105.7px;font-size:11.5px;color:#1f8f1f;transform:scaleX(0.9341);transform-origin:0 50%;">Available</div>
<svg class="a" style="left:126.2px;top:109.2px;" width="6" height="8.6" viewBox="0 0 7 10" fill="none"><path d="M3.5 8.6C1.5 6 0.8 4.8 0.8 3.4a2.7 2.7 0 0 1 5.4 0c0 1.4-.7 2.6-2.7 5.2z" stroke="#8a8886" stroke-width="1"/><circle cx="3.5" cy="3.4" r="0.7" fill="#8a8886"/></svg>
<div class="t" style="left:136.8px;top:105.7px;font-size:11.5px;color:#767574;transform:scaleX(0.9388);transform-origin:0 50%;">Baltimore</div>
<div class="a" style="left:15px;top:126px;width:32px;height:32px;background:#0078d4;border-radius:50%;"></div>
<svg class="a" style="left:27px;top:136px;" width="9" height="12" viewBox="0 0 9 12" fill="none"><rect x="1" y="0.6" width="6.6" height="10.8" stroke="#fff" stroke-width="1.05"/><path d="M0.9 6.2h2.2" stroke="#fff" stroke-width="1.1"/></svg>
<div class="t" style="left:59.1px;top:124.7px;font-size:12.3px;color:#454443;letter-spacing:-0.144px;">dflaxhome</div>
<svg class="a" style="left:59px;top:144.8px;" width="12" height="12" viewBox="0 0 12 12" fill="none"><circle cx="6" cy="6" r="4.9" stroke="#1f8f1f" stroke-width="0.85"/><path d="M6 3.2V6.2H8.3" stroke="#1f8f1f" stroke-width="0.85"/></svg>
<div class="t" style="left:76.0px;top:143.7px;font-size:11.5px;color:#1f8f1f;transform:scaleX(0.9341);transform-origin:0 50%;">Available</div>
<div class="a" style="left:15px;top:164px;width:32px;height:32px;background:#0078d4;border-radius:50%;"></div>
<svg class="a" style="left:27px;top:174px;" width="9" height="12" viewBox="0 0 9 12" fill="none"><rect x="1" y="0.6" width="6.6" height="10.8" stroke="#fff" stroke-width="1.05"/><path d="M0.9 6.2h2.2" stroke="#fff" stroke-width="1.1"/></svg>
<div class="t" style="left:59.1px;top:162.7px;font-size:12.3px;color:#454443;letter-spacing:-0.101px;">Psych-Midtown6-Conf</div>
<svg class="a" style="left:59px;top:182.8px;" width="12" height="12" viewBox="0 0 12 12" fill="none"><circle cx="6" cy="6" r="4.9" stroke="#1f8f1f" stroke-width="0.85"/><path d="M6 3.2V6.2H8.3" stroke="#1f8f1f" stroke-width="0.85"/></svg>
<div class="t" style="left:76.0px;top:181.7px;font-size:11.5px;color:#1f8f1f;transform:scaleX(0.9341);transform-origin:0 50%;">Available</div>
<div class="a" style="left:15px;top:202px;width:32px;height:32px;background:#0078d4;border-radius:50%;"></div>
<svg class="a" style="left:27px;top:212px;" width="9" height="12" viewBox="0 0 9 12" fill="none"><rect x="1" y="0.6" width="6.6" height="10.8" stroke="#fff" stroke-width="1.05"/><path d="M0.9 6.2h2.2" stroke="#fff" stroke-width="1.1"/></svg>
<div class="t" style="left:59.1px;top:200.7px;font-size:12.3px;color:#454443;letter-spacing:-0.161px;">Psych-Midtown-Carruthers</div>
<svg class="a" style="left:59px;top:220.8px;" width="12" height="12" viewBox="0 0 12 12" fill="none"><circle cx="6" cy="6" r="4.9" stroke="#1f8f1f" stroke-width="0.85"/><path d="M6 3.2V6.2H8.3" stroke="#1f8f1f" stroke-width="0.85"/></svg>
<div class="t" style="left:76.0px;top:219.7px;font-size:11.5px;color:#1f8f1f;transform:scaleX(0.9341);transform-origin:0 50%;">Available</div>
<div class="a" style="left:15px;top:240px;width:32px;height:32px;background:#0078d4;border-radius:50%;"></div>
<svg class="a" style="left:27px;top:250px;" width="9" height="12" viewBox="0 0 9 12" fill="none"><rect x="1" y="0.6" width="6.6" height="10.8" stroke="#fff" stroke-width="1.05"/><path d="M0.9 6.2h2.2" stroke="#fff" stroke-width="1.1"/></svg>
<div class="t" style="left:59.1px;top:238.7px;font-size:12.3px;color:#454443;transform:scaleX(0.9413);transform-origin:0 50%;">Psych-S12A04-Conf</div>
<svg class="a" style="left:59px;top:258.8px;" width="12" height="12" viewBox="0 0 12 12" fill="none"><circle cx="6" cy="6" r="4.9" stroke="#1f8f1f" stroke-width="0.85"/><path d="M6 3.2V6.2H8.3" stroke="#1f8f1f" stroke-width="0.85"/></svg>
<div class="t" style="left:76.0px;top:257.7px;font-size:11.5px;color:#1f8f1f;transform:scaleX(0.9341);transform-origin:0 50%;">Available</div>
<div class="a" style="left:15px;top:278px;width:32px;height:32px;background:#0078d4;border-radius:50%;"></div>
<svg class="a" style="left:27px;top:288px;" width="9" height="12" viewBox="0 0 9 12" fill="none"><rect x="1" y="0.6" width="6.6" height="10.8" stroke="#fff" stroke-width="1.05"/><path d="M0.9 6.2h2.2" stroke="#fff" stroke-width="1.1"/></svg>
<div class="t" style="left:59.1px;top:276.7px;font-size:12.3px;color:#454443;transform:scaleX(0.9539);transform-origin:0 50%;">Psych-Gambling-Conference Room</div>
<svg class="a" style="left:59px;top:296.8px;" width="12" height="12" viewBox="0 0 12 12" fill="none"><circle cx="6" cy="6" r="4.9" stroke="#1f8f1f" stroke-width="0.85"/><path d="M6 3.2V6.2H8.3" stroke="#1f8f1f" stroke-width="0.85"/></svg>
<div class="t" style="left:76.0px;top:295.7px;font-size:11.5px;color:#1f8f1f;transform:scaleX(0.9341);transform-origin:0 50%;">Available</div>
<div class="a" style="left:15px;top:316px;width:32px;height:32px;background:#0078d4;border-radius:50%;"></div>
<svg class="a" style="left:27px;top:326px;" width="9" height="12" viewBox="0 0 9 12" fill="none"><rect x="1" y="0.6" width="6.6" height="10.8" stroke="#fff" stroke-width="1.05"/><path d="M0.9 6.2h2.2" stroke="#fff" stroke-width="1.1"/></svg>
<div class="t" style="left:59.1px;top:314.7px;font-size:12.3px;color:#454443;transform:scaleX(0.9254);transform-origin:0 50%;">MPRC-Tawes-Conf</div>
<svg class="a" style="left:59px;top:334.8px;" width="12" height="12" viewBox="0 0 12 12" fill="none"><circle cx="6" cy="6" r="4.9" stroke="#1f8f1f" stroke-width="0.85"/><path d="M6 3.2V6.2H8.3" stroke="#1f8f1f" stroke-width="0.85"/></svg>
<div class="t" style="left:76.0px;top:333.7px;font-size:11.5px;color:#1f8f1f;transform:scaleX(0.9341);transform-origin:0 50%;">Available</div>
<svg class="a" style="left:126.2px;top:337.2px;" width="6" height="8.6" viewBox="0 0 7 10" fill="none"><path d="M3.5 8.6C1.5 6 0.8 4.8 0.8 3.4a2.7 2.7 0 0 1 5.4 0c0 1.4-.7 2.6-2.7 5.2z" stroke="#8a8886" stroke-width="1"/><circle cx="3.5" cy="3.4" r="0.7" fill="#8a8886"/></svg>
<div class="t" style="left:136.7px;top:333.7px;font-size:11.5px;color:#767574;transform:scaleX(0.9298);transform-origin:0 50%;">Catonsville</div>
<div class="a" style="left:15px;top:354px;width:32px;height:32px;background:#0078d4;border-radius:50%;"></div>
<svg class="a" style="left:27px;top:364px;" width="9" height="12" viewBox="0 0 9 12" fill="none"><rect x="1" y="0.6" width="6.6" height="10.8" stroke="#fff" stroke-width="1.05"/><path d="M0.9 6.2h2.2" stroke="#fff" stroke-width="1.1"/></svg>
<div class="t" style="left:59.1px;top:352.7px;font-size:12.3px;color:#454443;transform:scaleX(0.9419);transform-origin:0 50%;">Psych-Conf737-431</div>
<svg class="a" style="left:59px;top:372.8px;" width="12" height="12" viewBox="0 0 12 12" fill="none"><circle cx="6" cy="6" r="4.9" stroke="#1f8f1f" stroke-width="0.85"/><path d="M6 3.2V6.2H8.3" stroke="#1f8f1f" stroke-width="0.85"/></svg>
<div class="t" style="left:76.0px;top:371.7px;font-size:11.5px;color:#1f8f1f;transform:scaleX(0.9341);transform-origin:0 50%;">Available</div>
</div>
<svg class="a" style="left:1062px;top:424px;" width="10" height="7" viewBox="0 0 10 7" fill="none"><path d="M0.8 6L5 2.2L9.2 6z" fill="#c6ccd2"/></svg>
<svg class="a" style="left:1062px;top:781px;" width="10" height="7" viewBox="0 0 10 7" fill="none"><path d="M0.8 1L5 4.8L9.2 1z" fill="#c6ccd2"/></svg>
<div class="a" style="left:1064px;top:583px;width:6px;height:150px;background:#c5c4c3;border-radius:3px;"></div>
<!-- annotations -->
<svg class="a" style="left:0px;top:0px;pointer-events:none;" width="1087" height="808" viewBox="0 0 1087 808" fill="none"><ellipse cx="263.1" cy="104.6" rx="32.8" ry="45.2" stroke="#d8000c" stroke-width="5.6"/><polygon points="309.6,131.9 420.4,150.4 520.6,167.8 640.6,191.8 700.6,203.0 699.4,209.6 639.4,198.2 519.4,173.8 419.6,154.4 309.4,133.1" fill="#e40000"/><path d="M696.2 199.4L703.2 206.9L693.4 211.2" stroke="#e40000" stroke-width="5" stroke-linejoin="miter" stroke-linecap="round"/></svg>
<div class="a" style="left:0;top:35px;width:1px;height:773px;background:#0a64c0"></div>
<div class="a" style="left:1084px;top:35px;width:1px;height:772px;background:#0f6cc4"></div>
<div class="a" style="left:0;top:806px;width:1085px;height:1px;background:#0f6cc4"></div>
<div class="a" style="left:0;top:807px;width:1087px;height:1px;background:#9a9a9a"></div>
<div class="a" style="left:1085px;top:0;width:2px;height:808px;background:linear-gradient(#d4d4d4,#b4b4b4 10%,#a8a8a8)"></div>
</body></html>
